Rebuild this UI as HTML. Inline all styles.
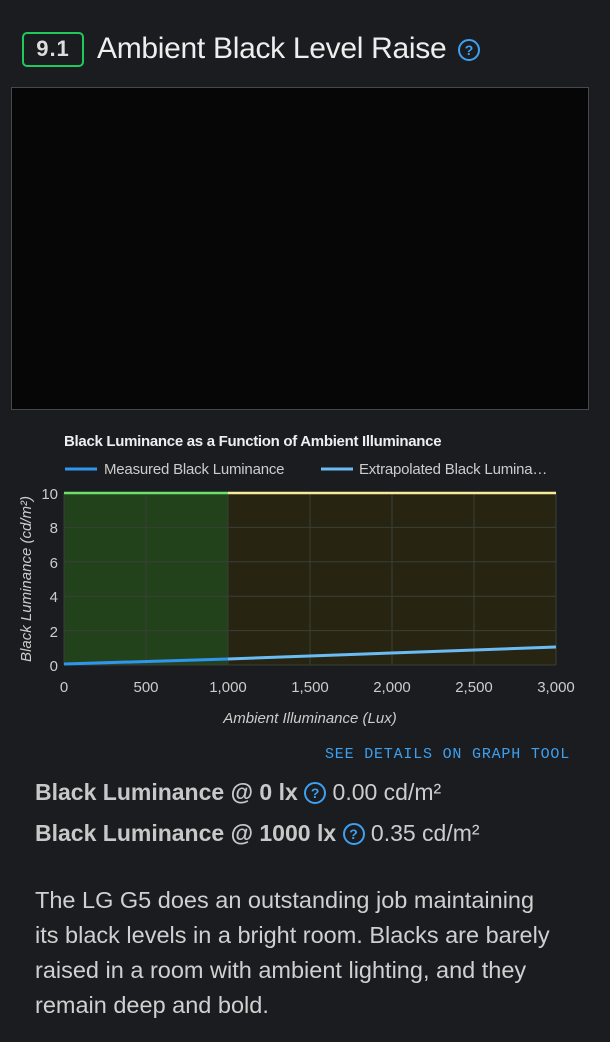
<!DOCTYPE html>
<html><head><meta charset="utf-8"><style>
html,body{margin:0;padding:0;background:#1b1c1f;width:610px;height:1042px;overflow:hidden;font-family:"Liberation Sans",sans-serif;color:#e8e8e8}
.q{display:inline-block;border:2px solid #3ea0f0;border-radius:50%;color:#3ea0f0;font-weight:bold;text-align:center;box-sizing:border-box}
</style></head><body>
<div style="position:absolute;left:22px;top:32px;width:62px;height:35px;border:2.5px solid #1fc95b;border-radius:5px;box-sizing:border-box;font-size:22px;font-weight:bold;color:#ddd;text-align:center;line-height:30px;letter-spacing:1px">9.1</div>
<div style="position:absolute;left:97px;top:30px;font-size:30px;color:#eee;letter-spacing:-0.3px;line-height:38px;white-space:nowrap">Ambient Black Level Raise</div>
<span class="q" style="position:absolute;left:458px;top:39px;width:22px;height:22px;font-size:14px;line-height:18px">?</span>
<div style="position:absolute;left:11px;top:87px;width:578px;height:323px;border:1px solid #46484c;box-sizing:border-box;background:#060606"></div>
<svg style="position:absolute;left:0;top:0" width="610" height="740" font-family="Liberation Sans, sans-serif">
<text x="64" y="446" font-size="15" font-weight="bold" fill="#eee" letter-spacing="-0.3">Black Luminance as a Function of Ambient Illuminance</text>
<line x1="65" y1="469" x2="97" y2="469" stroke="#2f96f0" stroke-width="3"/>
<text x="104" y="474" font-size="15" fill="#ccc" letter-spacing="-0.2">Measured Black Luminance</text>
<line x1="321" y1="469" x2="353" y2="469" stroke="#6bbcf5" stroke-width="3"/>
<text x="359" y="474" font-size="15" fill="#ccc" letter-spacing="-0.2">Extrapolated Black Lumina…</text>
<rect x="64" y="493" width="164" height="172" fill="#22421c"/>
<rect x="228" y="493" width="328" height="172" fill="#272512"/>
<g stroke="#3a3f36" stroke-width="1">
<line x1="146" y1="493" x2="146" y2="665"/><line x1="228" y1="493" x2="228" y2="665"/><line x1="310" y1="493" x2="310" y2="665"/><line x1="392" y1="493" x2="392" y2="665"/><line x1="474" y1="493" x2="474" y2="665"/><line x1="556" y1="493" x2="556" y2="665"/>
<line x1="64" y1="527.4" x2="556" y2="527.4"/><line x1="64" y1="561.8" x2="556" y2="561.8"/><line x1="64" y1="596.2" x2="556" y2="596.2"/><line x1="64" y1="630.6" x2="556" y2="630.6"/><line x1="64" y1="665" x2="556" y2="665"/><line x1="64" y1="493" x2="64" y2="665"/>
</g>
<line x1="64" y1="493" x2="228" y2="493" stroke="#6fe06a" stroke-width="2.5"/>
<line x1="228" y1="493" x2="556" y2="493" stroke="#f5eb98" stroke-width="2.5"/>
<line x1="64" y1="664" x2="228" y2="659" stroke="#2f96f0" stroke-width="3"/>
<line x1="228" y1="659" x2="556" y2="647" stroke="#6bbcf5" stroke-width="3"/>
<g font-size="15" fill="#ccc" text-anchor="end">
<text x="58" y="499">10</text><text x="58" y="533">8</text><text x="58" y="568">6</text><text x="58" y="602">4</text><text x="58" y="637">2</text><text x="58" y="671">0</text>
</g>
<g font-size="15" fill="#ccc" text-anchor="middle">
<text x="64" y="692">0</text><text x="146" y="692">500</text><text x="228" y="692">1,000</text><text x="310" y="692">1,500</text><text x="392" y="692">2,000</text><text x="474" y="692">2,500</text><text x="556" y="692">3,000</text>
</g>
<text x="310" y="723" font-size="15" font-style="italic" fill="#ccc" text-anchor="middle">Ambient Illuminance (Lux)</text>
<text transform="translate(31,579) rotate(-90)" font-size="15" font-style="italic" fill="#ccc" text-anchor="middle">Black Luminance (cd/m²)</text>
</svg>
<div style="position:absolute;left:325px;top:746px;font-family:'Liberation Mono',monospace;font-size:15px;color:#3ea0f0;letter-spacing:0.8px;white-space:nowrap">SEE DETAILS ON GRAPH TOOL</div>
<div style="position:absolute;left:35px;top:778px;font-size:23px;line-height:28px;color:#ccc;white-space:nowrap"><b style="color:#c8c8c8">Black Luminance @ 0 lx</b> <span class="q" style="width:22px;height:22px;font-size:14px;line-height:18px;vertical-align:2px">?</span> 0.00 cd/m²</div>
<div style="position:absolute;left:35px;top:819px;font-size:23px;line-height:28px;color:#ccc;white-space:nowrap"><b style="color:#c8c8c8">Black Luminance @ 1000 lx</b> <span class="q" style="width:22px;height:22px;font-size:14px;line-height:18px;vertical-align:2px">?</span> 0.35 cd/m²</div>
<div style="position:absolute;left:35px;top:883px;width:570px;font-size:23.5px;line-height:35px;color:#d0d0d0;white-space:nowrap">The LG G5 does an outstanding job maintaining<br>its black levels in a bright room. Blacks are barely<br>raised in a room with ambient lighting, and they<br>remain deep and bold.</div>
</body></html>
